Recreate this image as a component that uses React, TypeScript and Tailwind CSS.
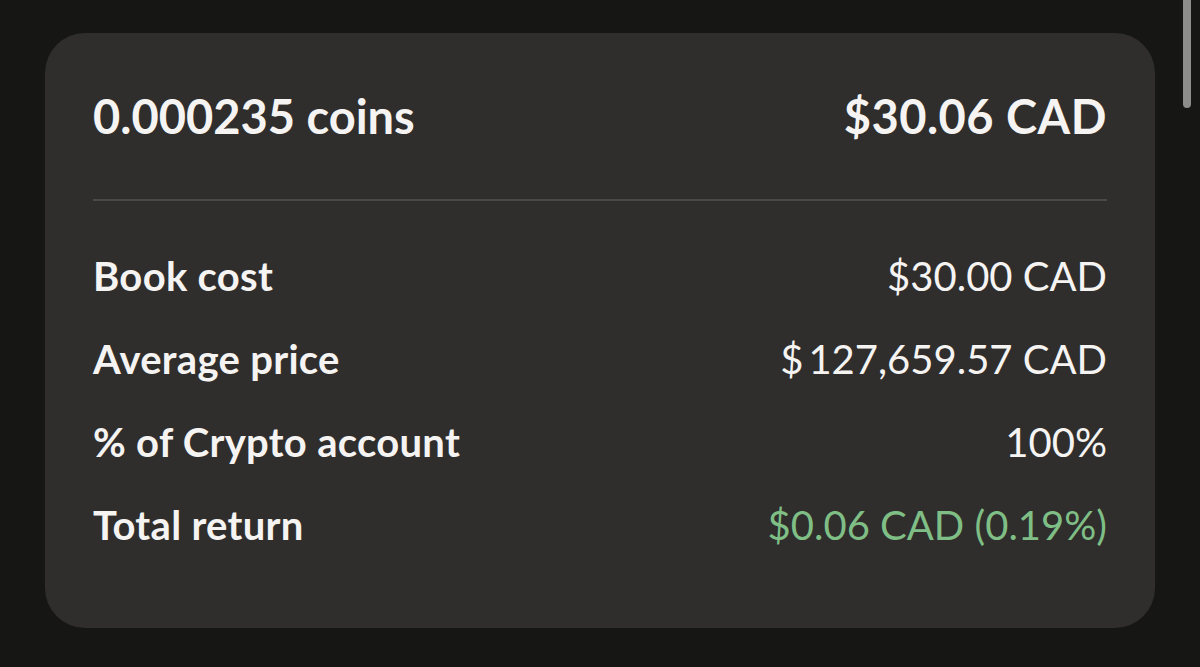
const rows: { label: string; value: string; positive?: boolean }[] = [
  { label: "Book cost", value: "$30.00 CAD" },
  { label: "Average price", value: "$\u2009127,659.57 CAD" },
  { label: "% of Crypto account", value: "100%" },
  { label: "Total return", value: "$0.06 CAD (0.19%)", positive: true },
];

export default function App() {
  return (
    <div className="relative h-[667px] w-[1200px] overflow-hidden bg-[#161615] font-['Lato','Noto_Sans',sans-serif] text-[#f5f4f2]">
      {/* scrollbar thumb */}
      <div className="absolute right-[9px] top-[-6px] h-[114px] w-[8px] rounded-full bg-[#8c8c8b]" />

      <div className="px-[45px] pt-[33px]">
        <div className="rounded-[40px] bg-[#2f2e2d] px-12 pb-[61px] pt-[60px]">
          <div className="flex items-baseline justify-between">
            <div className="text-[47px] font-bold leading-[47px]">0.000235 coins</div>
            <div className="text-[47px] font-bold leading-[47px] tracking-[0.5px]">$30.06 CAD</div>
          </div>

          <div className="mt-[59px] h-[2px] bg-[#4a4948]" />

          <div className="mt-[34px] flex flex-col">
            {rows.map((r) => (
              <div key={r.label} className="flex items-baseline justify-between text-[40px] leading-[83px]">
                <span className="font-bold tracking-[0.3px]">{r.label}</span>
                <span className={`font-normal ${r.positive ? "text-[#7fbf86]" : ""}`}>{r.value}</span>
              </div>
            ))}
          </div>
        </div>
      </div>
    </div>
  );
}
